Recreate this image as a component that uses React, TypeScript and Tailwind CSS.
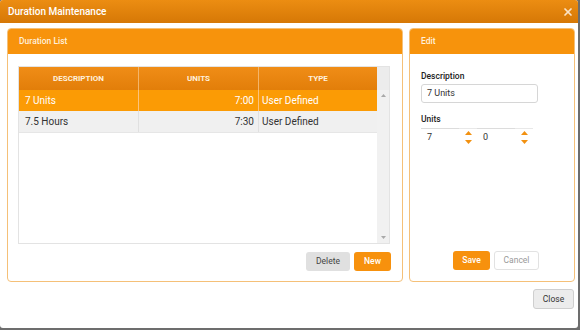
import { X } from 'lucide-react';

const rows = [
    { description: '7 Units', units: '7:00', type: 'User Defined', selected: true },
    { description: '7.5 Hours', units: '7:30', type: 'User Defined', selected: false },
];

function Spinner() {
    return (
        <div className="flex flex-col items-center leading-none text-[#f29111]">
            <svg width="7" height="4" viewBox="0 0 7 4"><path d="M0 4 L3.5 0 L7 4 Z" fill="currentColor" /></svg>
            <svg width="7" height="4" viewBox="0 0 7 4" className="mt-[5px]"><path d="M0 0 L3.5 4 L7 0 Z" fill="currentColor" /></svg>
        </div>
    );
}

function UnitField({ value }: { value: string }) {
    return (
        <div className="flex w-[56px] items-center border-t border-[#dcdcdc]">
            <span className="flex-1 pl-[6px] text-[9px] text-[#333]">{value}</span>
            <div className="flex h-[18px] w-[18px] items-center justify-center border-t border-[#e8e8e8] -mt-px">
                <Spinner />
            </div>
        </div>
    );
}

export default function App() {
    return (
        <div className="h-[330px] w-[580px] bg-[#6d6d6d]" style={{ fontFamily: 'Roboto, "Liberation Sans", sans-serif' }}>
            <div className="flex h-[328px] w-[578px] flex-col overflow-hidden rounded-[3px] bg-white">
                {/* Title */}
                <div className="flex h-[23px] shrink-0 items-center justify-between bg-gradient-to-b from-[#ec8d12] to-[#d67806] pl-[8px] pr-[4px]">
                    <span className="text-[10px] font-medium text-white">Duration Maintenance</span>
                    <X size={12} strokeWidth={3.5} className="text-[#fbe3c6]" />
                </div>

                <div className="flex gap-[6px] pl-[7px] pt-[5px]">
                    {/* Duration list */}
                    <div className="flex h-[254px] w-[396px] shrink-0 flex-col overflow-hidden rounded-[4px] border border-[#f5c078]">
                        <div className="flex h-[25px] items-center bg-[#f7930c] pl-[11px] text-[8.5px] font-medium text-[#fff0dc]">
                            Duration List
                        </div>
                        <div className="pl-[10px] pr-[12px] pt-[12px]">
                            <div className="h-[178px] border border-[#e3e3e3] bg-white">
                                <div className="flex h-[23px]">
                                    <div className="flex w-[358px] bg-gradient-to-b from-[#f08d16] to-[#e27e09] text-[8px] font-bold text-[#fff1de]">
                                        <div className="flex w-[120px] items-center justify-center border-r border-[#f4b56a]">DESCRIPTION</div>
                                        <div className="flex w-[120px] items-center justify-center border-r border-[#f4b56a]">UNITS</div>
                                        <div className="flex flex-1 items-center justify-center">TYPE</div>
                                    </div>
                                    <div className="flex-1 bg-[#ececec]" />
                                </div>
                                <div className="flex h-[153px]">
                                    <div className="w-[358px]">
                                        {rows.map((r) => (
                                            <div
                                                key={r.description}
                                                className={`flex h-[21px] items-center text-[10px] ${r.selected ? 'bg-[#fb9b05] text-white' : 'bg-[#f0f0f0] text-[#333]'}`}
                                            >
                                                <div className={`flex h-full w-[120px] items-center border-r pl-[6px] ${r.selected ? 'border-[#fcc37c]' : 'border-[#e0e0e0]'}`}>{r.description}</div>
                                                <div className={`flex h-full w-[120px] items-center justify-end border-r pr-[4px] ${r.selected ? 'border-[#fcc37c]' : 'border-[#e0e0e0]'}`}>{r.units}</div>
                                                <div className="flex h-full flex-1 items-center pl-[3px]">{r.type}</div>
                                            </div>
                                        ))}
                                        <div className="h-[1px] w-full bg-[#e6e6e6]" />
                                    </div>
                                    <div className="flex flex-1 flex-col items-center justify-between bg-[#f1f1f1] py-[4px] text-[#a9a9a9]">
                                        <svg width="5" height="3" viewBox="0 0 5 3"><path d="M0 3 L2.5 0 L5 3 Z" fill="currentColor" /></svg>
                                        <svg width="5" height="3" viewBox="0 0 5 3"><path d="M0 0 L2.5 3 L5 0 Z" fill="currentColor" /></svg>
                                    </div>
                                </div>
                            </div>
                            <div className="mt-[8px] -mr-[1px] flex justify-end gap-[4px]">
                                <button className="h-[19px] w-[44px] rounded-[3px] bg-[#e0e0e0] text-[8.5px] text-[#444]">Delete</button>
                                <button className="h-[19px] w-[37px] rounded-[3px] bg-[#f7910d] text-[8.5px] font-medium text-white">New</button>
                            </div>
                        </div>
                    </div>

                    {/* Edit */}
                    <div className="flex h-[254px] w-[166px] shrink-0 flex-col overflow-hidden rounded-[4px] border border-[#f5c078]">
                        <div className="flex h-[25px] items-center bg-[#f7930c] pl-[11px] text-[8.5px] font-medium text-[#fff0dc]">
                            Edit
                        </div>
                        <div className="flex flex-1 flex-col pl-[11px] pt-[16px]">
                            <label className="text-[8.5px] font-medium leading-[12px] text-[#222]">Description</label>
                            <div className="mt-[2px] flex h-[19px] w-[117px] items-center rounded-[3px] border border-[#d6d6d6] pl-[5px] text-[9px] text-[#333]">
                                7 Units
                            </div>
                            <label className="mt-[10px] text-[8.5px] font-medium leading-[12px] text-[#222]">Units</label>
                            <div className="mt-[3px] flex">
                                <UnitField value="7" />
                                <UnitField value="0" />
                            </div>
                            <div className="mt-auto mb-[11px] flex justify-end gap-[4px] pr-[35px]">
                                <button className="h-[19px] w-[37px] rounded-[3px] bg-[#f7910d] text-[8.5px] font-medium text-white">Save</button>
                                <button className="h-[19px] w-[45px] rounded-[3px] border border-[#e2e2e2] bg-white text-[8.5px] text-[#999]">Cancel</button>
                            </div>
                        </div>
                    </div>
                </div>

                <div className="mt-[7px] flex justify-end pr-[4px]">
                    <button className="h-[20px] w-[41px] rounded-[3px] border border-[#cfcfcf] bg-[#ececec] text-[8.5px] text-[#333]">Close</button>
                </div>
            </div>
        </div>
    );
}
